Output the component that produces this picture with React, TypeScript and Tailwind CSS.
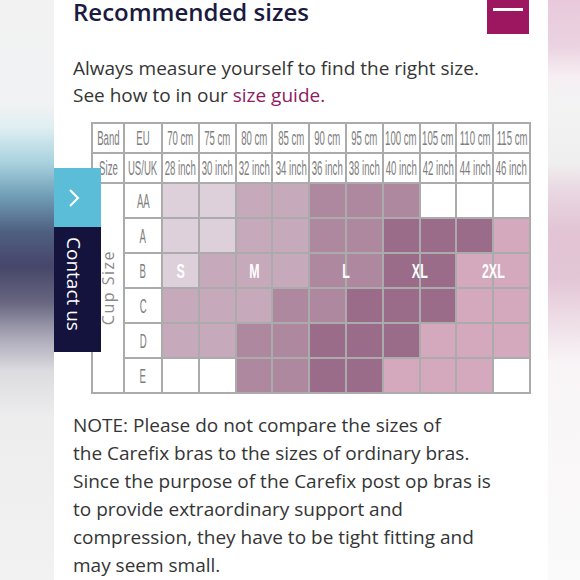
const cellBg: Record<string, string> = {
  L: "bg-[#ddd0da]",
  M: "bg-[#c6a9ba]",
  D: "bg-[#ae889f]",
  X: "bg-[#9b6c8a]",
  P: "bg-[#d4a8bd]",
  W: "bg-white",
};

const rows = [
  { cup: "AA", cells: "LLMMDDDWWW" },
  { cup: "A", cells: "LLMMDDXXXP" },
  { cup: "B", cells: "LMMMDDXXPP" },
  { cup: "C", cells: "MMMDDXXXPP" },
  { cup: "D", cells: "MMDDXXXPPP" },
  { cup: "E", cells: "WWDDXXPPPW" },
];

const eu = ["70 cm", "75 cm", "80 cm", "85 cm", "90 cm", "95 cm", "100 cm", "105 cm", "110 cm", "115 cm"];
const us = ["28 inch", "30 inch", "32 inch", "34 inch", "36 inch", "38 inch", "40 inch", "42 inch", "44 inch", "46 inch"];

const labels: Record<number, { t: string; span: boolean }> = {
  0: { t: "S", span: false },
  2: { t: "M", span: false },
  4: { t: "L", span: true },
  6: { t: "XL", span: true },
  8: { t: "2XL", span: true },
};

function Cond({ children }: { children: React.ReactNode }) {
  return (
    <span className="inline-block whitespace-nowrap scale-x-[0.48] font-['Liberation_Sans',sans-serif] text-[20px] leading-none text-[#7e7e7e]">
      {children}
    </span>
  );
}

function Cell({ children }: { children?: React.ReactNode }) {
  return <div className="flex items-center justify-center overflow-visible bg-white">{children}</div>;
}

function Label({ t }: { t: string }) {
  return (
    <span className="inline-block whitespace-nowrap scale-x-[0.62] font-['Liberation_Sans',sans-serif] font-bold text-[20px] leading-none text-white">
      {t}
    </span>
  );
}

export default function App() {
  return (
    <div className="relative flex h-[580px] w-[580px] overflow-hidden font-['Open_Sans',sans-serif]">
      <div className="w-[54px] shrink-0 bg-[linear-gradient(180deg,#f2f2f3_0%,#f1f2f3_18%,#dfeef2_22%,#a9d2df_28%,#6f9cb5_34%,#4f5f80_40%,#46466a_46%,#67657f_52%,#a9a7b6_58%,#dcdce0_64%,#ededee_72%,#f2f2f2_100%)]" />
      <div className="w-[494px] shrink-0 bg-white pl-[19px] pr-[19px]">
        <div className="flex items-start justify-between">
          <h2 className="text-[24px] font-semibold leading-[24px] text-[#1b1a40]">Recommended sizes</h2>
          <div className="mt-[-8px] flex h-[42px] w-[42px] items-center justify-center bg-[#9c1760]">
            <div className="mt-[-8px] h-[3px] w-[30px] bg-white" />
          </div>
        </div>
        <p className="mt-[21px] text-[19px] leading-[27px] text-[#353535]">
          Always measure yourself to find the right size.
          <br />
          See how to in our <span className="text-[#8e1a5f]">size guide.</span>
        </p>
        <div className="ml-[18px] mt-[13px] grid h-[272px] w-[440px] grid-cols-[30px_36px_repeat(10,minmax(0,1fr))] grid-rows-[28px_28px_repeat(6,33px)] gap-[2px] bg-[#ababab] p-[2px]">
          <Cell><Cond>Band</Cond></Cell>
          <Cell><Cond>EU</Cond></Cell>
          {eu.map((e) => (
            <Cell key={e}><Cond>{e}</Cond></Cell>
          ))}
          <Cell><Cond>Size</Cond></Cell>
          <Cell><Cond>US/UK</Cond></Cell>
          {us.map((e) => (
            <Cell key={e}><Cond>{e}</Cond></Cell>
          ))}
          {rows.map((r, ri) => (
            <>
              {ri === 0 && (
                <div key="cup" className="row-span-6 flex items-center justify-center bg-white">
                  <span className="rotate-180 text-[16px] tracking-[1.5px] text-[#8a8a8a] [writing-mode:vertical-rl]">Cup Size</span>
                </div>
              )}
              <Cell key={r.cup}><Cond>{r.cup}</Cond></Cell>
              {r.cells.split("").map((c, ci) => {
                const lab = ri === 2 ? labels[ci] : undefined;
                return (
                  <div key={`${ri}-${ci}`} className={`${cellBg[c]} ${lab ? "relative" : ""}`}>
                    {lab && !lab.span && (
                      <div className="flex h-full items-center justify-center">
                        <Label t={lab.t} />
                      </div>
                    )}
                    {lab && lab.span && (
                      <div className="absolute left-0 top-0 flex h-full w-[calc(200%+2px)] items-center justify-center">
                        <Label t={lab.t} />
                      </div>
                    )}
                  </div>
                );
              })}
            </>
          ))}
        </div>
        <p className="mt-[17px] text-[19px] leading-[28px] text-[#353535]">
          NOTE: Please do not compare the sizes of
          <br />
          the Carefix bras to the sizes of ordinary bras.
          <br />
          Since the purpose of the Carefix post op bras is
          <br />
          to provide extraordinary support and
          <br />
          compression, they have to be tight fitting and
          <br />
          may seem small.
        </p>
      </div>
      <div className="w-[32px] shrink-0 bg-[linear-gradient(180deg,#e8c9db_0%,#ebd3e1_8%,#f6eef2_13%,#f3f3f4_18%,#f0efef_28%,#e9d7e1_33%,#e2c4d5_40%,#e3c6d6_48%,#efe0e8_56%,#f9f5f7_63%,#fafafa_100%)]" />

      <div className="absolute left-[54px] top-[168px] w-[47px]">
        <div className="flex h-[59px] items-center justify-center bg-[#5bbdd7]">
          <svg width="12" height="20" viewBox="0 0 12 20" fill="none" className="ml-[-8px]">
            <path d="M2 2 L10 10 L2 18" stroke="white" strokeWidth="2" />
          </svg>
        </div>
        <div className="flex h-[125px] justify-center bg-[#13133d] pt-[10px]">
          <span className="text-[19px] leading-none text-white [writing-mode:vertical-rl] ml-[-8px]">Contact us</span>
        </div>
      </div>
    </div>
  );
}
